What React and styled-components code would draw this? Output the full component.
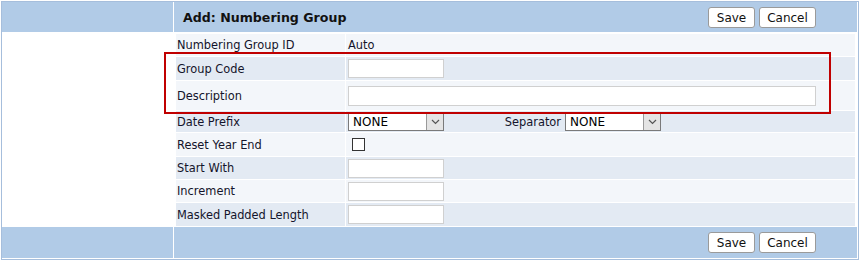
import React from "react";
import styled, { createGlobalStyle } from "styled-components";

const Global = createGlobalStyle`
  html, body { margin: 0; padding: 0; background: #fff; }
  body { font-family: "DejaVu Sans", Verdana, sans-serif; font-size: 11.4px; color: #14142b; }
`;

const Stage = styled.div`
  position: relative;
  width: 860px;
  height: 260px;
  padding-top: 1px;
  padding-left: 1px;
  box-sizing: border-box;
`;

const Frame = styled.div`
  width: 858px;
  height: 259px;
  box-sizing: border-box;
  border: 1px solid #a6bedc;
  padding: 0 1px 1px 0;
  display: grid;
  grid-template-columns: 171px 1fr;
  grid-template-rows: 30px 193px 31px;
  gap: 1px;
  background: #fff;
`;

const Bar = styled.div`
  background: #b1cbe7;
  display: flex;
  align-items: center;
`;

const BarMain = styled(Bar)`
  justify-content: space-between;
  padding: 0 41px 0 9px;
`;

const Title = styled.h1`
  margin: 0;
  font-family: "DejaVu Sans", Verdana, sans-serif;
  font-size: 12.6px;
  font-weight: bold;
  color: #111;
`;

const Buttons = styled.div`
  display: flex;
  gap: 4px;
  margin-left: auto;
  padding-top: ${(p) => p.$top || 0}px;
`;

const Button = styled.button`
  height: 21px;
  width: ${(p) => p.$w}px;
  padding: 0;
  border: 1px solid #9a9a9a;
  border-radius: 3px;
  background: #fff;
  font-family: "DejaVu Sans", Tahoma, sans-serif;
  font-size: 12px;
  color: #111;
`;

const Side = styled.div`
  background: #fff;
`;

const Body = styled.div`
  background: #fff;
  padding: 1px 2px 0 2px;
  display: flex;
  flex-direction: column;
  gap: 1px;
`;

const Row = styled.div`
  display: grid;
  grid-template-columns: 169px 1fr;
  column-gap: 1px;
  height: ${(p) => p.$h}px;
`;

const Cell = styled.div`
  background: ${(p) => (p.$alt ? "#e3eaf3" : "#f3f6fa")};
  display: flex;
  align-items: center;
  padding-left: ${(p) => (p.$value ? 2 : 1)}px;
  white-space: nowrap;
`;

const TextInput = styled.input`
  box-sizing: border-box;
  width: ${(p) => p.$w}px;
  height: ${(p) => p.$h || 19}px;
  border: 1px solid #d0d0d0;
  background: #fff;
  padding: 0 2px;
  margin: 0;
  font-family: inherit;
  font-size: 11px;
  outline: none;
`;

const Select = styled.div`
  box-sizing: border-box;
  width: 96px;
  height: 19px;
  border: 1px solid #7a7a7a;
  background: #fff;
  display: flex;
  align-items: stretch;
`;

const SelectValue = styled.span`
  flex: 1;
  display: flex;
  align-items: center;
  padding-left: 4px;
  font-family: "DejaVu Sans", Verdana, sans-serif;
  font-size: 12px;
  color: #000;
`;

const SelectArrow = styled.span`
  width: 16px;
  border-left: 1px solid #9a9a9a;
  background: #e4e4e4;
  display: flex;
  align-items: center;
  justify-content: center;
`;

const SepLabel = styled.span`
  width: 121px;
  box-sizing: border-box;
  text-align: right;
  padding-right: 4px;
`;

const Checkbox = styled.span`
  box-sizing: border-box;
  width: 13px;
  height: 13px;
  margin-left: 4px;
  border: 1px solid #333;
  background: #fff;
`;

const Highlight = styled.div`
  position: absolute;
  left: 164px;
  top: 52px;
  width: 667px;
  height: 62px;
  box-sizing: border-box;
  border: 2px solid #c00000;
  pointer-events: none;
`;

const Chevron = () => (
  <svg width="9" height="6" viewBox="0 0 9 6">
    <path d="M1 1 L4.5 4.5 L8 1" fill="none" stroke="#555" strokeWidth="1.2" />
  </svg>
);

const Dropdown = ({ value }) => (
  <Select>
    <SelectValue>{value}</SelectValue>
    <SelectArrow>
      <Chevron />
    </SelectArrow>
  </Select>
);

export default function App() {
  return (
    <>
      <Global />
      <Stage>
        <Frame>
          <Bar />
          <BarMain>
            <Title>Add: Numbering Group</Title>
            <Buttons $top={1}>
              <Button $w={47}>Save</Button>
              <Button $w={57}>Cancel</Button>
            </Buttons>
          </BarMain>
          <Side />
          <Body>
            <Row $h={22}>
              <Cell>Numbering Group ID</Cell>
              <Cell $value>Auto</Cell>
            </Row>
            <Row $h={23}>
              <Cell $alt>Group Code</Cell>
              <Cell $alt $value>
                <TextInput $w={96} />
              </Cell>
            </Row>
            <Row $h={29}>
              <Cell>Description</Cell>
              <Cell $value>
                <TextInput $w={468} $h={20} />
              </Cell>
            </Row>
            <Row $h={21}>
              <Cell $alt>Date Prefix</Cell>
              <Cell $alt $value>
                <Dropdown value="NONE" />
                <SepLabel>Separator</SepLabel>
                <Dropdown value="NONE" />
              </Cell>
            </Row>
            <Row $h={23}>
              <Cell>Reset Year End</Cell>
              <Cell $value>
                <Checkbox />
              </Cell>
            </Row>
            <Row $h={22}>
              <Cell $alt>Start With</Cell>
              <Cell $alt $value>
                <TextInput $w={96} />
              </Cell>
            </Row>
            <Row $h={22}>
              <Cell>Increment</Cell>
              <Cell $value>
                <TextInput $w={96} />
              </Cell>
            </Row>
            <Row $h={23}>
              <Cell $alt>Masked Padded Length</Cell>
              <Cell $alt $value>
                <TextInput $w={96} />
              </Cell>
            </Row>
          </Body>
          <Bar />
          <BarMain>
            <Buttons>
              <Button $w={47}>Save</Button>
              <Button $w={57}>Cancel</Button>
            </Buttons>
          </BarMain>
        </Frame>
        <Highlight />
      </Stage>
    </>
  );
}
